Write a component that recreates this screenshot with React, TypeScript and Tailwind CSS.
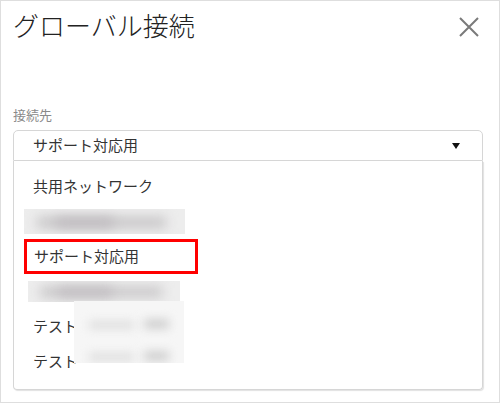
import React from "react";

const font = { fontFamily: '"Noto Sans CJK JP", "Noto Sans", sans-serif' };

function Blur({ w, h, className = "" }: { w: number; h: number; className?: string }) {
  return (
    <div className={`relative overflow-hidden ${className}`} style={{ width: w, height: h }}>
      <div className="absolute inset-0 bg-[#ededed]" />
      <div className="absolute left-[8%] right-[12%] top-[30%] bottom-[25%] bg-[#c6c4c6] blur-[6px]" />
      <div className="absolute left-[20%] right-[45%] top-[35%] bottom-[30%] bg-[#bdb9bd] blur-[6px]" />
    </div>
  );
}

function Row({ children }: { children: React.ReactNode }) {
  return <div className="h-[35px] flex items-center">{children}</div>;
}

export default function App() {
  return (
    <div className="w-[500px] h-[403px] border border-[#dedede] bg-white overflow-hidden" style={font}>
      <div className="flex justify-between items-start pl-[12px] pr-[20px] pt-[7px]">
        <h1 className="text-[26px] leading-[34px] font-light text-[#222]">グローバル接続</h1>
        <svg width="20" height="20" viewBox="0 0 20 20" className="mt-[9px]">
          <path d="M1 1 L19 19 M19 1 L1 19" stroke="#7a7a7a" strokeWidth="2" fill="none" />
        </svg>
      </div>
      <div className="pl-[12px] mt-[65px] text-[13px] leading-[16px] text-[#8a8a8a]">接続先</div>
      <div className="mx-[12px] mt-[7px] w-[470px]">
        <div className="h-[31px] border border-[#d6d6d6] rounded-t-[5px] flex items-center justify-between pl-[19px] pr-[22px] text-[15px] text-[#333]">
          <span>サポート対応用</span>
          <svg width="8" height="6" viewBox="0 0 8 6">
            <path d="M0 0 L8 0 L4 6 Z" fill="#111" />
          </svg>
        </div>
        <div className="h-[229px] border border-t-0 border-[#d6d6d6] rounded-b-[4px] shadow-[1px_1px_1px_rgba(0,0,0,0.12)] pt-[8px] text-[15px] text-[#333]">
          <div className="pl-[10px]">
            <Row><span className="pl-[9px]">共用ネットワーク</span></Row>
            <Row><Blur w={161} h={25} /></Row>
            <Row>
              <div className="h-[35px] w-[174px] border-[3px] border-[#ff0000] flex items-center pl-[7px]">サポート対応用</div>
            </Row>
            <Row><Blur w={152} h={21} className="ml-[4px]" /></Row>
            <div className="relative">
              <Row><span className="pl-[9px]">テスト</span></Row>
              <Row><span className="pl-[9px]">テスト</span></Row>
              <div className="absolute left-[50px] top-[-8px] w-[110px] h-[62px] bg-[#f6f6f6] overflow-hidden">
                <div className="absolute left-[15px] right-[50px] top-[20px] h-[8px] bg-[#dedede] blur-[5px]" />
                <div className="absolute left-[70px] right-[15px] top-[18px] h-[10px] bg-[#d0d0d0] blur-[5px]" />
                <div className="absolute left-[15px] right-[50px] top-[52px] h-[8px] bg-[#dedede] blur-[5px]" />
                <div className="absolute left-[70px] right-[15px] top-[50px] h-[10px] bg-[#d0d0d0] blur-[5px]" />
              </div>
            </div>
          </div>
        </div>
      </div>
    </div>
  );
}
